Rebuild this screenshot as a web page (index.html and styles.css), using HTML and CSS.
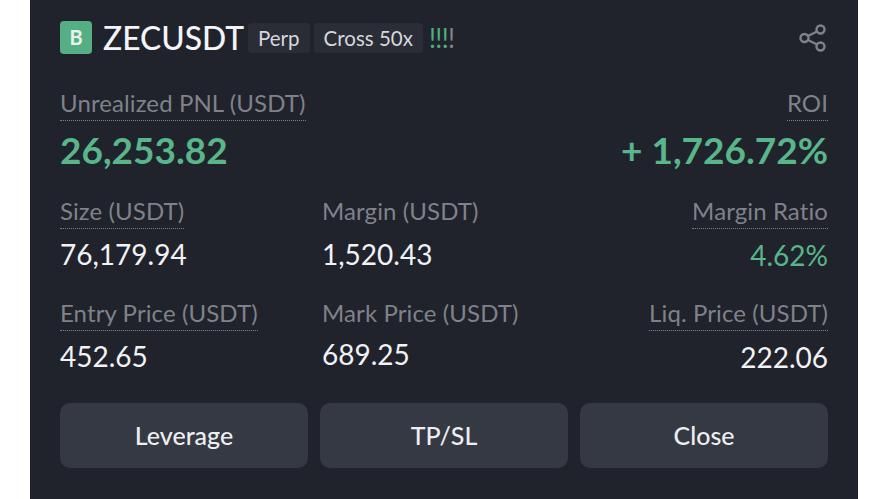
FILE: index.html
```html
<!DOCTYPE html>
<html lang="en">
<head>
  <meta charset="UTF-8">
  <title>ZECUSDT Position</title>
  <link rel="stylesheet" href="styles.css">
</head>
<body>
  <div class="panel">
    <div class="header">
      <span class="side">B</span>
      <span class="symbol">ZECUSDT</span>
      <span class="tag">Perp</span>
      <span class="tag">Cross 50x</span>
      <span class="bangs"><i>!</i><i>!</i><i>!</i><i class="off">!</i></span>
      <svg class="share" width="30" height="30" viewBox="0 0 30 30" fill="none" stroke="#7f828a" stroke-width="2.4">
        <circle cx="22.5" cy="6.500" r="4"/>
        <circle cx="6.500" cy="15" r="4"/>
        <circle cx="22.5" cy="23.5" r="4"/>
        <path d="M10 13 L19 8.500M10 17 L19 21.500"/>
      </svg>
    </div>

    <div class="pnl-row">
      <div>
        <span class="label">Unrealized PNL (USDT)</span>
        <p class="big">26,253.82</p>
      </div>
      <div class="right">
        <span class="label">ROI</span>
        <p class="big">+ 1,726.72%</p>
      </div>
    </div>

    <div class="stats">
      <div>
        <span class="label">Size (USDT)</span>
        <p class="value">76,179.94</p>
      </div>
      <div>
        <span class="label plain">Margin (USDT)</span>
        <p class="value">1,520.43</p>
      </div>
      <div class="right">
        <span class="label">Margin Ratio</span>
        <p class="value low green">4.62%</p>
      </div>
      <div>
        <span class="label">Entry Price (USDT)</span>
        <p class="value">452.65</p>
      </div>
      <div>
        <span class="label plain">Mark Price (USDT)</span>
        <p class="value high">689.25</p>
      </div>
      <div class="right">
        <span class="label">Liq. Price (USDT)</span>
        <p class="value low">222.06</p>
      </div>
    </div>

    <div class="buttons">
      <button class="btn">Leverage</button>
      <button class="btn">TP/SL</button>
      <button class="btn">Close</button>
    </div>
  </div>
</body>
</html>
```

FILE: styles.css
```css
html, body {
  height: 100%;
}

body {
  margin: 0px;
  background-color: #ffffff;
  font-family: 'Lato', 'Liberation Sans', sans-serif;
  overflow: hidden;
}

p {
  margin: 0px;
}

.panel {
  box-sizing: border-box;
  width: 828px;
  height: 499px;
  margin-left: 30px;
  padding: 21px 30px 0px 30px;
  background-color: #20232b;
}

.header {
  display: flex;
  align-items: center;
  height: 33px;
}

.side {
  width: 32px;
  height: 33px;
  border-radius: 4px;
  background-color: #55ae84;
  color: #e8f3ee;
  font-size: 20px;
  font-weight: 700;
  line-height: 33px;
  text-align: center;
}

.symbol {
  margin-left: 11px;
  color: #f3f4f7;
  font-size: 31.8px;
  font-weight: 500;
}

.tag {
  margin-left: 4px;
  padding: 0px 10px;
  height: 30px;
  line-height: 30px;
  border-radius: 4px;
  background-color: #2a2d36;
  color: #d5d7dc;
  font-size: 20.5px;
}

.bangs {
  margin-left: 6px;
  color: #4fae7f;
  font-size: 26px;
  letter-spacing: -0.6px;
}

.bangs i {
  font-style: normal;
}

.bangs .off {
  color: #7f828a;
}

.share {
  margin-left: auto;
}

.pnl-row {
  display: flex;
  justify-content: space-between;
  margin-top: 34px;
}

.label {
  display: inline-block;
  padding-bottom: 2px;
  color: #7f828a;
  font-size: 24px;
  letter-spacing: 0.1px;
  line-height: 30px;
  border-bottom: 1px dotted #80838a;
}

.label.plain {
  border-bottom-color: transparent;
}

.right {
  text-align: right;
}

.big {
  margin-top: 7px;
  color: #58b68a;
  font-size: 37px;
  font-weight: 700;
  line-height: 44px;
}

.stats {
  display: grid;
  grid-template-columns: 262px 1fr 1fr;
  row-gap: 25px;
  margin-top: 24px;
}

.value {
  margin-top: 7px;
  color: #f1f2f5;
  font-size: 28px;
  line-height: 36px;
}

.value.low {
  margin-top: 8px;
}

.value.high {
  margin-top: 5px;
}

.value.green {
  color: #58b68a;
}

.buttons {
  display: flex;
  gap: 12px;
  margin-top: 28px;
}

.btn {
  flex: 1;
  height: 65px;
  padding-bottom: 3px;
  border: none;
  border-radius: 10px;
  background-color: #353943;
  color: #eceef2;
  font-family: inherit;
  font-size: 25px;
  font-weight: 500;
}
```
